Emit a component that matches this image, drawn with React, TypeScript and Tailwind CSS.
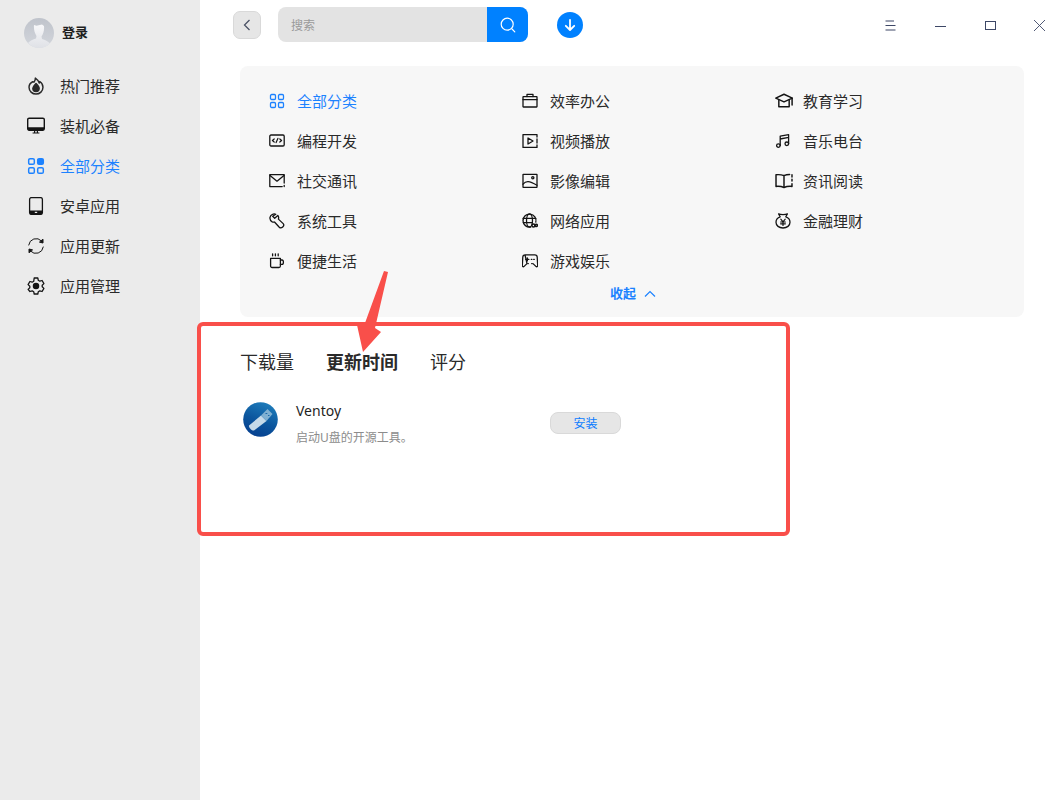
import type { ReactNode } from "react";

const Svg = ({ children, size = 16, className = "" }: { children: ReactNode; size?: number; className?: string }) => (
  <svg
    width={size}
    height={size}
    viewBox="0 0 16 16"
    fill="none"
    stroke="currentColor"
    strokeWidth="1.3"
    strokeLinecap="round"
    strokeLinejoin="round"
    className={className}
  >
    {children}
  </svg>
);

const GridIcon = ({ size = 16, filled = false }: { size?: number; filled?: boolean }) => (
  <Svg size={size}>
    <rect x="1.5" y="1.5" width="5" height="5" rx="1.2" />
    <rect x="9.5" y="1.5" width="5" height="5" rx="1.2" fill={filled ? "currentColor" : "none"} />
    <rect x="1.5" y="9.5" width="5" height="5" rx="1.2" />
    <rect x="9.5" y="9.5" width="5" height="5" rx="1.2" />
  </Svg>
);

/* sidebar icons */
const FireIcon = () => (
  <Svg size={18}>
    <path d="M5 4.2 C3 5.2 1.8 7 1.8 9.200 a6.200 6 0 0 0 12.400 0 C14.200 7 13.200 5.200 11.400 4 L10.900 5.400 C10.400 3.600 9.200 2.200 7.400 1 C7.600 2.800 6.800 3.600 6.200 4.600 Z" />
    <path d="M8 5.800 C9.600 7.400 10.800 8.600 10.800 10 a2.800 2.800 0 0 1 -5.600 0 C5.200 8.600 6.600 7.400 8 5.800 Z" fill="currentColor" />
  </Svg>
);

const MonitorIcon = () => (
  <svg width="18" height="18" viewBox="0 0 18 18" fill="none">
    <rect x="0.700" y="1.200" width="16.600" height="12" rx="1.400" stroke="#141414" strokeWidth="1.400" />
    <path d="M1 10.200h16v1.800a1.400 1.400 0 0 1-1.400 1.400H2.400A1.400 1.400 0 0 1 1 12z" fill="#141414" />
    <path d="M7.600 13.400v2.400M10.400 13.400v2.400M5.600 16h6.800" stroke="#141414" strokeWidth="1.200" />
  </svg>
);

const PhoneIcon = () => (
  <svg width="18" height="18" viewBox="0 0 18 18" fill="none">
    <rect x="2.600" y="0.600" width="12.800" height="16.800" rx="1.800" stroke="#141414" strokeWidth="1.300" />
    <path d="M2.600 13.400h12.800v2.200a1.800 1.800 0 0 1-1.800 1.800H4.400a1.800 1.800 0 0 1-1.800-1.800z" fill="#141414" />
    <rect x="7.800" y="14.800" width="2.400" height="1.200" fill="#ebebeb" />
  </svg>
);

const RefreshIcon = () => (
  <svg width="18" height="18" viewBox="0 0 18 18" fill="none" stroke="#141414" strokeWidth="1" strokeLinecap="round">
    <path d="M1.700 8 A7.500 7.500 0 0 1 14.500 3.900" />
    <path d="M16.300 10 A7.500 7.500 0 0 1 3.500 14.100" />
    <path d="M16 2.600 L16 6 L12.800 5.200 Z" fill="#141414" />
    <path d="M2 15.400 L2 12 L5.200 12.800 Z" fill="#141414" />
  </svg>
);

const GearIcon = () => (
  <svg width="18" height="18" viewBox="0 0 18 18" fill="none" stroke="#141414" strokeWidth="1.300" strokeLinejoin="round">
    <path d="M7.200 1h3.600l.5 2.300 1.500.9 2.300-.7 1.800 3.100-1.700 1.600v1.600l1.700 1.600-1.800 3.100-2.300-.7-1.500.9-.5 2.300H7.200l-.5-2.300-1.500-.9-2.300.7L1.100 12.400l1.700-1.600V9.200L1.100 7.600l1.800-3.100 2.300.7 1.500-.9z" />
    <circle cx="9" cy="9" r="2.600" fill="#141414" />
  </svg>
);

/* category icons */
const CodeIcon = () => (
  <Svg>
    <rect x="0.800" y="2" width="14.400" height="11" rx="1.200" />
    <path d="M5.200 6 3.400 7.500l1.800 1.500M10.800 6l1.800 1.500-1.800 1.500M8.900 5.400 7.100 9.600" strokeWidth="1.200" />
  </Svg>
);
const CaseIcon = () => (
  <Svg>
    <rect x="1" y="3.600" width="14" height="10.400" rx="0.400" />
    <path d="M5 3.600V1.400h6v2.200M1 6.600h14" />
  </Svg>
);
const CapIcon = () => (
  <Svg size={18}>
    <path d="M8 2 L15.400 5.400 L8 8.800 L0.700 5.400 Z" />
    <path d="M3.400 7v6.200h9.200V7M15.200 5.600v6" />
  </Svg>
);
const PlayIcon = () => (
  <Svg>
    <path d="M15 4V1.600H1v12.800h14V12M15 6v4" />
    <path d="M6 5v6l5-3z" />
  </Svg>
);
const MusicIcon = () => (
  <Svg>
    <circle cx="3.400" cy="12.600" r="1.800" />
    <circle cx="11.800" cy="10.800" r="1.800" />
    <path d="M5.200 12.400V3.200l8.400-1.600v9.200M5.200 6l8.400-1.600" />
  </Svg>
);
const MailIcon = () => (
  <Svg>
    <path d="M15.200 10V1.600H0.800v12h12.400M15.200 12.300v1.300" />
    <path d="M1 2.400l7 5.800 7-5.800" />
  </Svg>
);
const PictureIcon = () => (
  <Svg>
    <rect x="1" y="1.400" width="14" height="13" rx="0.300" />
    <circle cx="10.800" cy="4.800" r="1.100" />
    <path d="M1 11.200 C4 7.600 7 7.600 15 12.200" />
  </Svg>
);
const BookIcon = () => (
  <Svg size={18}>
    <path d="M8 3.200 C6 2.400 3.400 2.200 0.900 2.400 V12.800 C3.400 12.600 6 12.900 8 13.800 C10 12.900 12.600 12.600 15.100 12.800 V10.400 M8 3.200 V13.800 M8 3.200 C9.600 2.500 11.400 2.300 13 2.300 M15.100 2.400 V4.400 M15.100 6.400 V8" />
  </Svg>
);
const WrenchIcon = () => (
  <Svg>
    <path d="M6.800 1.300 C4.400.300 1.600 1.800 1 4.400 .7 6.400 1.600 8 3.200 8.800 4 9.100 4.800 9.200 5.500 9L10.300 14.200C12.300 16.200 16.100 12.800 14.200 10.600L9.400 6.100C9.900 4.700 9.600 3.400 8.800 2.400L5.700 5.200 3.700 3.200z" />
  </Svg>
);
const GlobeIcon = () => (
  <Svg>
    <path d="M13.800 9.200A6.500 6.500 0 1 0 8.600 14" />
    <ellipse cx="7.500" cy="7.500" rx="3" ry="6.500" />
    <path d="M1.200 5.400h12.600M1.200 9.600h9" />
    <circle cx="11.400" cy="12.400" r="1.500" strokeWidth="1.500" />
    <circle cx="14.200" cy="12.400" r="1.200" strokeWidth="1.500" />
  </Svg>
);
const CoinIcon = () => (
  <Svg>
    <path d="M3.600 0.900c2 1 6.800 1 8.800 0L10.800 3.800c2.600.8 4.200 2.900 4.200 5.400 0 3.400-3 5.800-7 5.800s-7-2.400-7-5.800c0-2.500 1.600-4.600 4.200-5.400z" />
    <path d="M5.800 6.200 8 8.800l2.200-2.600M5.600 9h4.800M5.600 10.800h4.800M8 8.800v3.600" strokeWidth="1.200" />
  </Svg>
);
const CupIcon = () => (
  <Svg>
    <path d="M1.600 5.400h9.800v7.600c0 .9-.6 1.500-1.500 1.500H3.100c-.9 0-1.500-.6-1.500-1.500z" />
    <path d="M11.400 7h1.600c1.900 0 1.900 4.400-.1 4.400h-1.500M3.600 .8v2M6.400 .8v2M9.200 .8v2" />
  </Svg>
);
const GameIcon = () => (
  <Svg>
    <path d="M3 1.800h10c1.300 0 2.100.9 2.200 2.200l.5 8.600c.1 1.100-1.100 1.500-1.800.8L11 10.600M5 10.600 2.100 13.400c-.7.700-1.900.3-1.800-.8L.8 4C.9 2.700 1.700 1.800 3 1.800z" />
    <path d="M3.800 6.400h3M5.300 4.900v3M9.400 6.400h.4M11.800 6.400h.4M5.800 10.600h.5M9.700 10.600h.5" strokeWidth="1.400" />
  </Svg>
);

const sideItems = [
  { label: "热门推荐", icon: <FireIcon /> },
  { label: "装机必备", icon: <MonitorIcon /> },
  { label: "全部分类", icon: <GridIcon size={18} filled />, active: true },
  { label: "安卓应用", icon: <PhoneIcon /> },
  { label: "应用更新", icon: <RefreshIcon /> },
  { label: "应用管理", icon: <GearIcon /> },
];

const categories = [
  { label: "全部分类", icon: <GridIcon />, active: true },
  { label: "效率办公", icon: <CaseIcon /> },
  { label: "教育学习", icon: <CapIcon /> },
  { label: "编程开发", icon: <CodeIcon /> },
  { label: "视频播放", icon: <PlayIcon /> },
  { label: "音乐电台", icon: <MusicIcon /> },
  { label: "社交通讯", icon: <MailIcon /> },
  { label: "影像编辑", icon: <PictureIcon /> },
  { label: "资讯阅读", icon: <BookIcon /> },
  { label: "系统工具", icon: <WrenchIcon /> },
  { label: "网络应用", icon: <GlobeIcon /> },
  { label: "金融理财", icon: <CoinIcon /> },
  { label: "便捷生活", icon: <CupIcon /> },
  { label: "游戏娱乐", icon: <GameIcon /> },
];

const Avatar = () => (
  <svg width="30" height="30" viewBox="0 0 30 30">
    <defs>
      <linearGradient id="av" x1="0" y1="0" x2="0" y2="1">
        <stop offset="0" stopColor="#bfc3cb" />
        <stop offset="1" stopColor="#d3d6dc" />
      </linearGradient>
      <linearGradient id="bd" x1="0" y1="0" x2="0" y2="1">
        <stop offset="0" stopColor="#f8f8fa" />
        <stop offset="1" stopColor="#dfe1e6" />
      </linearGradient>
    </defs>
    <circle cx="15" cy="15" r="15" fill="url(#av)" />
    <path d="M10 7l2.500 0.800L18 6.500l2 1.500c.4 4-.6 8-2.500 10.500l.5 2.500c3 1 6 2 8 4.500A15 15 0 0 1 15 30 15 15 0 0 1 4 25c2-2.500 5-3.500 8-4.500l.5-2.500C10.500 15 9.600 11 10 7z" fill="url(#bd)" />
  </svg>
);

const VentoyLogo = () => (
  <svg width="35" height="35" viewBox="0 0 35 35">
    <defs>
      <linearGradient id="vt" x1="0.700" y1="0" x2="0.300" y2="1">
        <stop offset="0" stopColor="#1e7dbb" />
        <stop offset="0.550" stopColor="#0b559d" />
        <stop offset="1" stopColor="#063f8f" />
      </linearGradient>
    </defs>
    <circle cx="17.500" cy="17.500" r="17.300" fill="url(#vt)" />
    <path d="M6 23.500 L18 13.500 L23.500 19 L11 28.500 C9 29 5.500 25.500 6 23.500 Z" fill="#c6dae9" />
    <path d="M18 13.500 L24.500 7 L29.500 12 L23.500 19 Z" fill="#7fb0d2" />
    <path d="M22.500 11.500h1.800M25 13.500h1.500" stroke="#1e6aa8" strokeWidth="1.200" />
  </svg>
);

export default function App() {
  return (
    <div
      className="relative flex h-[800px] w-full overflow-hidden bg-white text-[#1f1f1f]"
      style={{ fontFamily: '"Noto Sans", "Noto Sans CJK SC", sans-serif' }}
    >
      <aside className="flex w-[200px] shrink-0 flex-col bg-[#ebebeb]">
        <div className="mt-[18px] ml-[24px] flex items-center gap-[8px]">
          <Avatar />
          <span className="text-[13px] font-bold">登录</span>
        </div>
        <nav className="mt-[18px] flex flex-col">
          {sideItems.map((item) => (
            <div
              key={item.label}
              className={`flex h-[40px] items-center gap-[15px] pl-[27px] text-[15px] ${
                item.active ? "text-[#1c82ff]" : "text-[#2a2a2a]"
              }`}
            >
              {item.icon}
              <span>{item.label}</span>
            </div>
          ))}
        </nav>
      </aside>

      <main className="flex min-w-0 flex-1 flex-col">
        <header className="mb-[16px] flex h-[50px] shrink-0 items-center pl-[33px]">
          <button className="flex h-[28px] w-[28px] items-center justify-center rounded-[7px] border border-[#d9d9d9] bg-[#e6e6e6] text-[#4b5266]">
            <svg width="10" height="14" viewBox="0 0 10 14" fill="none" stroke="currentColor" strokeWidth="1.300">
              <path d="M7.500 2 2.500 7l5 5" />
            </svg>
          </button>
          <div className="mb-[1px] ml-[17px] flex h-[35px] w-[250px] overflow-hidden rounded-[8px] bg-[#e3e3e3]">
            <span className="flex flex-1 items-center pt-[2px] pl-[13px] text-[12px] text-[#9a9a9a]">搜索</span>
            <span className="flex w-[41px] items-center justify-center bg-[#0081ff] text-white">
              <svg width="16" height="16" viewBox="0 0 16 16" fill="none" stroke="currentColor" strokeWidth="1.200" strokeLinecap="round">
                <circle cx="7.200" cy="7.200" r="6" />
                <path d="M12 12l2.800 2.800" />
              </svg>
            </span>
          </div>
          <span className="ml-[29px] flex h-[26px] w-[26px] items-center justify-center rounded-full bg-[#0081ff] text-white">
            <svg width="14" height="14" viewBox="0 0 14 14" fill="none" stroke="currentColor" strokeWidth="1.800" strokeLinecap="round" strokeLinejoin="round">
              <path d="M7 1.800v10M2.800 7.800 7 12l4.200-4.200" />
            </svg>
          </span>
          <div className="ml-auto flex items-center pr-[19px] text-[#3d4766]">
            <svg width="11" height="11" viewBox="0 0 11 11" stroke="currentColor" strokeWidth="1">
              <path d="M0.500 1h8.500M0.500 5.500h10M0.500 10h10" />
            </svg>
            <svg className="ml-[39px]" width="11" height="11" viewBox="0 0 11 11" stroke="currentColor" strokeWidth="1">
              <path d="M0 6.500h11" />
            </svg>
            <svg className="ml-[39px]" width="11" height="11" viewBox="0 0 11 11" fill="none" stroke="currentColor" strokeWidth="1">
              <rect x="0.500" y="1.500" width="10" height="8" />
            </svg>
            <svg className="ml-[38px]" width="11" height="11" viewBox="0 0 11 11" fill="none" stroke="currentColor" strokeWidth="0.900">
              <path d="M0 0l11 11M11 0 0 11" />
            </svg>
          </div>
        </header>

        <section className="ml-[40px] h-[251px] w-[784px] shrink-0 rounded-[8px] bg-[#f7f7f7] pt-[15px]">
          <div className="grid grid-cols-[253px_253px_253px] pl-[29px]">
            {categories.map((item) => (
              <div
                key={item.label}
                className={`flex h-[40px] items-center text-[15px] ${
                  item.active ? "text-[#1c82ff]" : "text-[#141414]"
                }`}
              >
                <span className="mb-[1px] flex w-[28px] shrink-0 items-center">{item.icon}</span>
                <span className={item.active ? "" : "text-[#2a2a2a]"}>{item.label}</span>
              </div>
            ))}
          </div>
          <div className="flex h-[26px] items-center justify-center gap-[8px] pl-[2px] text-[13px] font-bold text-[#1c82ff]">
            <span>收起</span>
            <svg width="12" height="8" viewBox="0 0 12 8" fill="none" stroke="currentColor" strokeWidth="1.200">
              <path d="M1 6.500 6 1.500l5 5" />
            </svg>
          </div>
        </section>

        <div className="mt-[30px] ml-[40px] flex h-[30px] items-center gap-[32px] text-[18px] text-[#2a2a2a]">
          <span>下载量</span>
          <span className="font-bold">更新时间</span>
          <span>评分</span>
        </div>

        <div className="mt-[25px] ml-[43px] flex">
          <VentoyLogo />
          <div className="ml-[18px] w-[254px]">
            <div className="mt-[-1px] text-[14px] leading-[20px]">Ventoy</div>
            <div className="mt-[9px] text-[12px] leading-[16px] text-[#8c8c8c]">启动U盘的开源工具。</div>
          </div>
          <button className="mt-[10px] flex h-[22px] w-[71px] items-center justify-center rounded-[8px] border border-[#d9d9d9] bg-[#e6e6e6] pt-[1px] text-[12px] text-[#0d7dff]">
            安装
          </button>
        </div>
      </main>

      {/* red annotation drawn over the page */}
      <div className="pointer-events-none absolute top-[322px] left-[197px] h-[214px] w-[593px] rounded-[6px] border-[4px] border-[#f94f4a]" />
      <svg className="pointer-events-none absolute top-[270px] left-[350px]" width="42" height="84" viewBox="0 0 42 84">
        <path d="M34 1 L38 2 L25 58 L31 62 L13 82 L7 55 L15 53 Z" fill="#f94f4a" />
      </svg>
    </div>
  );
}
